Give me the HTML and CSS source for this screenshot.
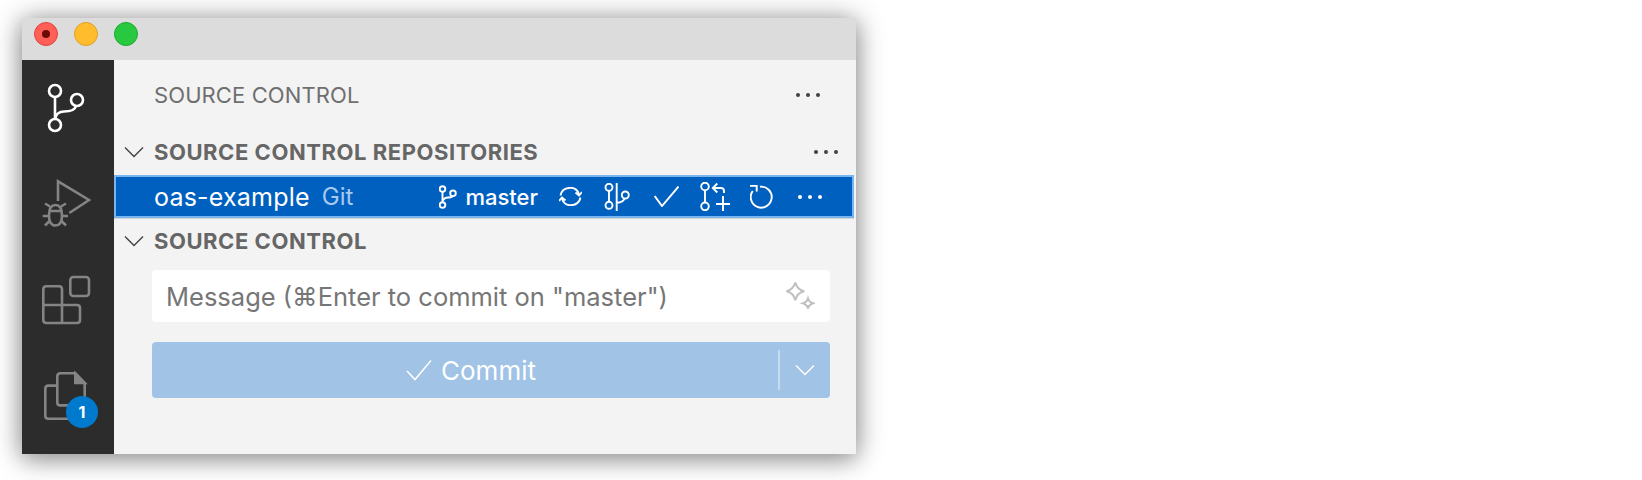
FILE: index.html
```html
<!DOCTYPE html>
<html lang="en">
<head>
<meta charset="utf-8">
<title>Source Control</title>
<link rel="stylesheet" href="styles.css">
</head>
<body>
<div class="window">
  <header class="titlebar">
    <span class="light red"><i class="red-dot"></i></span>
    <span class="light yellow"></span>
    <span class="light green"></span>
  </header>
  <div class="body">
    <nav class="activity">
      <div class="act-item act-scm">
        <svg class="act-icon" width="48" height="52" viewBox="0 0 48 52" fill="none" stroke="#fff" stroke-width="2.6">
          <circle cx="11" cy="9" r="6"/><circle cx="33" cy="18" r="6"/><circle cx="11" cy="43" r="6"/>
          <path d="M11 15V37M11 37C12 32 15 29.500 20 29.500C27 29.500 31 28 32 24"/>
        </svg>
      </div>
      <div class="act-item act-debug">
        <svg class="act-icon" width="52" height="52" viewBox="0 0 52 52" fill="none" stroke="#848484" stroke-width="2.600">
          <path d="M16 23V3.300L47 22L27.300 35"/>
          <path d="M7 37.500C7 30.500 9.500 27 13.500 27C17.500 27 20 30.500 20 37.500C20 44 17.500 47.500 13.500 47.500C9.500 47.500 7 44 7 37.500Z"/>
          <path d="M7 33H20M8 28.500L3 25.500M19 28.500L24 25.500M7 38H.7M20 38H26M8 42.500L3 47.500M19 42.500L24 47.500"/>
        </svg>
      </div>
      <div class="act-item act-ext">
        <svg class="act-icon" width="52" height="52" viewBox="0 0 52 52" fill="none" stroke="#848484" stroke-width="2.600">
          <rect x="28.300" y="3" width="18.700" height="19" rx="3"/>
          <path d="M4.300 12.300H17Q20 12.300 20 15.300V31H35Q38 31 38 34V46Q38 49 35 49H4.300Q1.300 49 1.300 46V15.300Q1.300 12.300 4.300 12.300ZM1.300 31H20V49"/>
        </svg>
      </div>
      <div class="act-item act-files">
        <svg class="act-icon" width="52" height="52" viewBox="0 0 52 52" fill="none" stroke="#848484" stroke-width="2.600">
          <path d="M15.300 14.600H6.300Q3.300 14.600 3.300 17.600V44.700Q3.300 47.700 6.300 47.700H27Q30 47.700 30 45V36"/>
          <path d="M18.300 34.400Q15.300 34.400 15.300 31.400V5.300Q15.300 2.300 18.300 2.300H33.300L42.700 12V31.400Q42.700 34.400 39.700 34.400Z"/>
          <path d="M33.300 2.300V12H42.700Z" fill="#848484"/>
        </svg>
        <span class="badge">1</span>
      </div>
    </nav>
    <main class="sidebar">
      <div class="view-title">
        <span class="view-label">SOURCE CONTROL</span>
        <span class="dots dots-dark"><i></i><i></i><i></i></span>
      </div>
      <div class="section-head section-repos">
        <svg class="chev" width="20" height="12" viewBox="0 0 20 12" fill="none" stroke="#424242" stroke-width="1.400"><path d="M1 1.500L10 10.500L19 1.500"/></svg>
        <span class="section-label">SOURCE CONTROL REPOSITORIES</span>
        <span class="dots dots-dark"><i></i><i></i><i></i></span>
      </div>
      <div class="repo-row">
        <span class="repo-name">oas-example</span>
        <span class="repo-kind">Git</span>
        <span class="repo-actions">
          <svg class="ico branch-ico" width="18" height="24" viewBox="0 0 18 24" fill="none" stroke="#fff">
            <circle cx="3.500" cy="4" r="2.800"/><circle cx="14" cy="8.300" r="2.800"/><circle cx="3.500" cy="20" r="2.800"/>
            <path d="M3.500 6.800V17.200M3.500 16C5 13 7 12.500 9 12.500C11.500 12.500 13 12 13.500 11"/>
          </svg>
          <span class="branch-name">master</span>
          <svg class="ico sync-ico" width="23" height="19" viewBox="0 0 23 19" fill="none" stroke="#fff">
            <path d="M1.500 8.500C2.500 3.500 6.500 .8 11.500 .8C15.500 .8 18.500 3 20 7"/>
            <path d="M21.500 10.500C20.500 15.500 16.500 18.200 11.500 18.200C7.500 18.200 4.500 16 3 12"/>
            <path d="M23 5L20 8.500L16.500 5.500M0 14L3 10.500L6.500 13.500"/>
          </svg>
          <svg class="ico stash-ico" width="26" height="28" viewBox="0 0 26 28" fill="none" stroke="#fff">
            <circle cx="5" cy="4.300" r="3.500"/><circle cx="5" cy="22.300" r="3.500"/><circle cx="21.300" cy="12" r="3.500"/>
            <path d="M5 7.800V18.800M12.700 0V28M12.700 20C17 19.500 19.500 18.500 20.500 15.500"/>
          </svg>
          <svg class="ico check-ico" width="25" height="21" viewBox="0 0 25 21" fill="none" stroke="#fff"><path d="M.7 10L8 20L24.500 .5"/></svg>
          <svg class="ico pr-ico" width="30" height="29" viewBox="0 0 30 29" fill="none" stroke="#fff">
            <circle cx="5" cy="4.500" r="3.800"/><circle cx="5" cy="24.300" r="3.800"/>
            <path d="M5 8.300V20.500M24 11V9Q24 6 21 6H13M17.300 1.500L12.800 6L17.300 10.500M23 14V29M16 22H30"/>
          </svg>
          <svg class="ico refresh-ico" width="24" height="24" viewBox="0 0 24 24" fill="none" stroke="#fff">
            <path d="M10 1.700A10.500 10.500 0 1 1 2.700 6M0 .8H6.700V6.500"/>
          </svg>
          <span class="dots dots-light"><i></i><i></i><i></i></span>
        </span>
      </div>
      <div class="section-head section-scm">
        <svg class="chev" width="20" height="12" viewBox="0 0 20 12" fill="none" stroke="#424242" stroke-width="1.400"><path d="M1 1.500L10 10.500L19 1.500"/></svg>
        <span class="section-label">SOURCE CONTROL</span>
      </div>
      <div class="message">
        <span class="placeholder">Message (⌘Enter to commit on "master")</span>
        <svg class="sparkle" width="30" height="30" viewBox="0 0 30 30" fill="none" stroke="#c0c0c0" stroke-width="2">
          <path d="M10.300 1.500C11.500 6.500 14 9 19.200 10.300C14 11.500 11.500 14 10.300 19.200C9 14 6.500 11.500 1.500 10.300C6.500 9 9 6.500 10.300 1.500Z"/>
          <path d="M23 17.500C23.700 20 25 21.500 28 22.300C25 23.200 23.700 24.700 23 27.500C22.300 24.700 21 23.200 18 22.300C21 21.500 22.300 20 23 17.500Z"/>
        </svg>
      </div>
      <div class="commit">
        <div class="commit-main">
          <svg class="commit-check" width="26" height="22" viewBox="0 0 26 22" fill="none" stroke="#fff" stroke-width="1.500"><path d="M1 12L9 20.500L25 1.500"/></svg>
          <span class="commit-label">Commit</span>
        </div>
        <span class="commit-sep"></span>
        <div class="commit-drop">
          <svg width="20" height="12" viewBox="0 0 20 12" fill="none" stroke="#fff" stroke-width="1.400"><path d="M1 1.500L10 10.500L19 1.500"/></svg>
        </div>
      </div>
    </main>
  </div>
</div>
</body>
</html>
```
FILE: styles.css
```css
* { box-sizing: border-box; }
html, body { margin: 0; padding: 0; background: #fff; }
body { width: 1642px; height: 480px; overflow: hidden; padding: 18px 0 0 22px; font-family: Inter, "Liberation Sans", sans-serif; }
.window { width: 834px; height: 436px; display: flex; flex-direction: column; box-shadow: 0 2px 26px rgba(0,0,0,.45), 0 8px 20px rgba(0,0,0,.12); }
.titlebar { height: 42px; background: #dcdcdc; display: flex; align-items: flex-start; gap: 16px; padding: 4px 12px 0; }
.light { width: 24px; height: 24px; border-radius: 50%; display: flex; align-items: center; justify-content: center; }
.red { background: #ff5f57; border: 1px solid #e0443e; }
.red-dot { width: 8px; height: 8px; border-radius: 50%; background: #6d0a05; }
.yellow { background: #ffbd2e; border: 1px solid #dfa023; }
.green { background: #28c940; border: 1px solid #1aab29; }
.body { flex: 1; display: flex; min-height: 0; }
.activity { width: 92px; background: #2c2c2c; display: flex; flex-direction: column; align-items: center; padding-top: 22px; }
.act-item { position: relative; width: 52px; height: 52px; display: flex; justify-content: center; }
.act-debug { margin-top: 44px; }
.act-ext { margin-top: 44px; }
.act-files { margin-top: 45px; }
.act-icon { display: block; }
.badge { position: absolute; left: 24px; top: 25px; width: 32px; height: 32px; border-radius: 50%; background: #007acc; color: #fff; font-size: 16px; font-weight: 700; display: flex; align-items: center; justify-content: center; }
.sidebar { flex: 1; background: #f3f3f3; min-width: 0; }
.view-title { height: 70px; display: flex; align-items: center; justify-content: space-between; padding: 0 36px 0 40px; }
.view-label { font-size: 22px; letter-spacing: .1px; color: #6f6f6f; }
.dots { display: flex; gap: 6px; }
.dots i { width: 4px; height: 4px; border-radius: 50%; background: #424242; display: block; }
.dots-light i { background: #fff; }
.section-head { display: flex; align-items: center; padding-left: 10px; }
.section-repos { height: 44px; padding-right: 18px; margin-bottom: 1px; }
.section-scm { height: 44px; margin-top: 1px; }
.chev { flex: none; }
.section-label { margin-left: 10px; font-size: 22px; font-weight: 700; letter-spacing: .55px; color: #666; flex: 1; }
.repo-row { height: 43px; margin-right: 2px; background: #0060c0; border: 2px solid #78b4ee; box-shadow: 0 1px 0 #d4d4d4; display: flex; align-items: center; padding: 0 30px 0 38px; color: #fff; }
.repo-name { font-size: 25px; letter-spacing: .2px; }
.repo-kind { margin-left: 12px; font-size: 24px; color: #a7c9ee; }
.repo-actions { margin-left: auto; display: flex; align-items: center; }
.ico { display: block; flex: none; stroke-width: 1.9px; }
.branch-name { margin-left: 8px; font-size: 22px; font-weight: 500; }
.sync-ico { margin-left: 21px; }
.stash-ico { margin-left: 22px; }
.check-ico { margin-left: 24px; }
.pr-ico { margin-left: 21px; }
.refresh-ico { margin-left: 20px; }
.dots-light { margin-left: 24px; }
.message { margin: 7px 26px 0 38px; height: 52px; background: #fff; border-radius: 4px; display: flex; align-items: center; justify-content: space-between; padding: 0 15px 0 14px; }
.placeholder { font-size: 25.5px; color: #767676; white-space: nowrap; }
.sparkle { display: block; flex: none; }
.commit { margin: 20px 26px 0 38px; height: 56px; background: #a1c3e6; border-radius: 4px; display: flex; align-items: center; color: #fff; }
.commit-main { flex: 1; display: flex; align-items: center; justify-content: center; gap: 9px; padding-left: 12px; }
.commit-check { display: block; }
.commit-label { font-size: 26px; }
.commit-sep { width: 2px; height: 40px; background: #c6dbf0; }
.commit-drop { width: 50px; display: flex; align-items: center; justify-content: center; }
```
